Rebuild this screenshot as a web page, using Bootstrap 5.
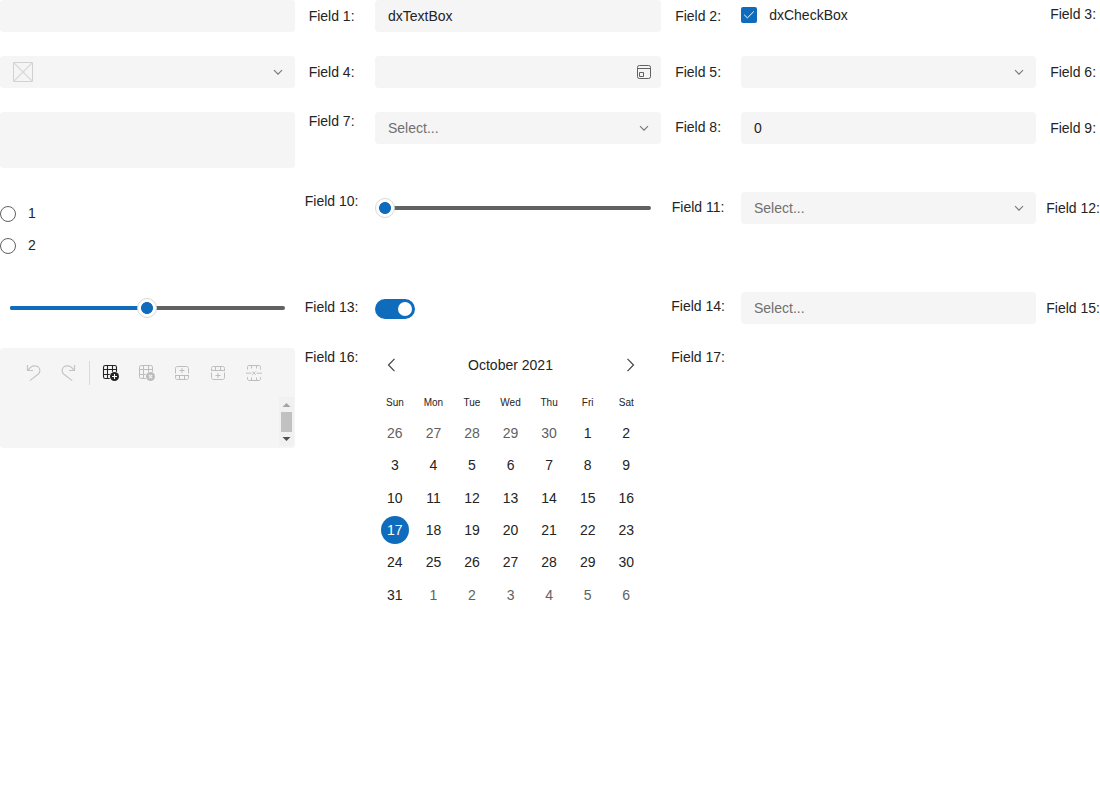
<!DOCTYPE html>
<html lang="en">
<head>
<meta charset="utf-8">
<title>Form</title>
<link href="https://cdn.jsdelivr.net/npm/bootstrap@5.3.0/dist/css/bootstrap.min.css" rel="stylesheet">
<style>
body{font-family:"Liberation Sans",Arial,sans-serif;font-size:14px;line-height:18px;color:#242424;background:#fff;overflow:hidden}
.form-grid{display:grid;grid-template-columns:295px 80px 286px 80px 295px 64px;grid-template-rows:56px 56px 80px 100px 56px auto}
.field-label{width:54px;margin-left:9.6px;text-align:center;white-space:nowrap;justify-self:start;align-self:start}
.col-shift{margin-left:10.1px}
.drop-4{margin-top:5px}.drop-5{margin-top:6px}.drop-6{margin-top:7px}
.editor{height:32px;background:#f5f5f5;border-radius:4px;padding:0 12px 0 13px}
.editor svg,.tools svg{display:block;flex:none}
.hint{color:#707070}
.check-box{width:16px;height:16px;border-radius:2px;background:#0f6cbd}
.radio-dot{width:16px;height:16px;border:1px solid #616161;border-radius:50%}
.range{height:20px;margin-top:6px}
.range-bar{height:4px;border-radius:2px;background:#616161;overflow:hidden;margin:0 10px;width:100%}
.range-fill{height:4px;background:#0f6cbd}
.handle{width:20px;height:20px;border-radius:50%;border:1px solid #d8d8d8;background:radial-gradient(circle,#0f6cbd 5.6px,#fff 6.3px)}
.toggle{width:40px;height:20px;border-radius:10px;background:#0f6cbd;padding-right:3px}
.toggle span{width:14px;height:14px;border-radius:50%;background:#fff}
.text-area{height:56px}
.rich{height:100px;background:#f5f5f5;border-radius:4px;overflow:hidden}
.tools{height:49px;padding-left:25px}
.tools .sep{width:1px;height:24px;background:#d9d9d9}
.scroller{width:15px;height:49px;background:#f1f1f1;margin-right:1px}
.scroller .thumb{width:11px;height:20px;background:#c1c1c1}
.cal{width:270px}
.cal-head{height:34px;padding:0 6px 0 7px}
.cal-grid{display:grid;grid-template-columns:repeat(7,38.57px);width:270px;margin-left:.6px}
.week-names{height:34.7px;padding-top:8px;font-size:10px;line-height:12px;align-items:center}
.days{grid-auto-rows:32.36px}
.days span{width:28px;height:28px;line-height:28px;border-radius:50%;text-align:center;place-self:center}
.days .out{color:#616161}
.days .sel{background:#0f6cbd;color:#fff}
</style>
</head>
<body>
<svg class="d-none">
<symbol id="chev" viewBox="0 0 10 6"><path d="M1 1.200 5 5.200 9 1.200" fill="none" stroke="#7a7a7a" stroke-width="1.200"/></symbol>
</svg>
<main class="form-grid">
<div class="editor"></div>
<div class="field-label drop-6">Field 1:</div>
<div class="editor d-flex align-items-center">dxTextBox</div>
<div class="field-label col-shift drop-6">Field 2:</div>
<div class="d-flex align-items-start"><div class="check-box" style="margin-top:7px"><svg class="d-block" width="16" height="16" fill="none" stroke="#fff" stroke-width="1"><path d="m3.2 7.8 3.2 3.1 6.4-6.4"/></svg></div><span style="margin:6px 0 0 12.2px">dxCheckBox</span></div>
<div class="field-label col-shift drop-4">Field 3:</div>

<div class="editor d-flex align-items-center justify-content-between"><svg width="20" height="20" fill="none" stroke="#d1d1d1"><path d="M.5.5h19v19H.5z"/><path d="m1 1 18 18M19 1 1 19" stroke-width="1.2" stroke="#d9d9d9"/></svg><svg width="10" height="6"><use href="#chev"/></svg></div>
<div class="field-label drop-6">Field 4:</div>
<div class="editor d-flex align-items-center justify-content-end" style="padding-right:10px"><svg width="14" height="14" fill="none" stroke="#616161"><rect x=".5" y=".5" width="13" height="13" rx="1.8"/><path d="M.5 3.5h13M2.5 7.5h4v4h-4z"/></svg></div>
<div class="field-label col-shift drop-6">Field 5:</div>
<div class="editor d-flex align-items-center justify-content-end"><svg width="10" height="6"><use href="#chev"/></svg></div>
<div class="field-label col-shift drop-6">Field 6:</div>

<div class="editor text-area"></div>
<div class="field-label">Field 7:</div>
<div class="editor d-flex align-items-center justify-content-between"><span class="hint">Select...</span><svg width="10" height="6"><use href="#chev"/></svg></div>
<div class="field-label col-shift drop-5">Field 8:</div>
<div class="editor d-flex align-items-center">0</div>
<div class="field-label col-shift drop-6">Field 9:</div>

<div class="d-flex flex-column" style="padding-top:12px;gap:14px">
<div class="d-flex"><div class="radio-dot mt-auto"></div><span style="margin-left:12px">1</span></div>
<div class="d-flex"><div class="radio-dot mt-auto"></div><span style="margin-left:12px">2</span></div></div>
<div class="field-label">Field 10:</div>
<div class="range position-relative d-flex align-items-center"><div class="range-bar"></div><div class="handle position-absolute" style="left:0"></div></div>
<div class="field-label col-shift drop-5">Field 11:</div>
<div class="editor d-flex align-items-center justify-content-between"><span class="hint">Select...</span><svg width="10" height="6"><use href="#chev"/></svg></div>
<div class="field-label col-shift drop-6">Field 12:</div>

<div class="range position-relative d-flex align-items-center"><div class="range-bar"><div class="range-fill" style="width:50%"></div></div><div class="handle position-absolute" style="left:137px"></div></div>
<div class="field-label drop-5">Field 13:</div>
<div><div class="toggle d-flex align-items-center justify-content-end" style="margin-top:7px"><span></span></div></div>
<div class="field-label col-shift drop-4">Field 14:</div>
<div class="editor d-flex align-items-center"><span class="hint">Select...</span></div>
<div class="field-label col-shift drop-6">Field 15:</div>

<div class="rich">
<div class="tools d-flex align-items-center">
<svg width="16" height="18" fill="none" stroke="#c4c4c4" stroke-width="1.15"><path d="M2.500 1v5.500H8M2.800 6.300C4.600 3.700 6.500 1.800 9.500 1.800c3.200 0 5.400 2 5.400 4.700 0 1.500-.6 2.700-1.800 3.700L4.800 16.600"/></svg>
<svg width="16" height="18" fill="none" stroke="#c4c4c4" stroke-width="1.15" style="margin-left:20px"><path d="M13.500 1v5.500H8M13.200 6.300C11.400 3.700 9.500 1.800 6.500 1.800 3.300 1.800 1.100 3.800 1.100 6.500c0 1.500.6 2.700 1.800 3.700l8.300 6.400"/></svg>
<div class="sep" style="margin-left:12px"></div>
<svg width="18" height="18" style="margin-left:12px"><g fill="none" stroke="#242424" stroke-width="1.1" transform="translate(1 1)"><rect x=".5" y=".5" width="13" height="13" rx="1.8"/><path d="M4.500.5v13M9.500.5v13M.5 4.500h13M.5 9.500h13"/></g><circle cx="12.500" cy="12.500" r="5.200" fill="#f5f5f5"/><circle cx="12.500" cy="12.500" r="4.500" fill="#242424"/><path d="M12.500 10v5M10 12.500h5" stroke="#fff" stroke-width="1.100"/></svg>
<svg width="18" height="18" style="margin-left:18px"><g fill="none" stroke="#bdbdbd" transform="translate(1 1)"><rect x=".5" y=".5" width="13" height="13" rx="1.8"/><path d="M4.500.5v13M9.500.5v13M.5 4.500h13M.5 9.500h13"/></g><circle cx="12.500" cy="12.500" r="5.200" fill="#f5f5f5"/><circle cx="12.500" cy="12.500" r="4.500" fill="#bdbdbd"/><path d="m10.900 10.900 3.200 3.200m0-3.200-3.200 3.200" stroke="#f5f5f5" stroke-width="1.100"/></svg>
<svg width="14" height="14" fill="none" stroke="#bdbdbd" style="margin-left:19px"><path d="M.5 7.500V2.300C.5 1.200 1.200.5 2.300.5h9.400c1.100 0 1.800.7 1.800 1.800v5.200M0 9.500h14M.5 9.500v2.200c0 1.100.7 1.800 1.800 1.800h9.400c1.100 0 1.800-.7 1.800-1.800V9.500M4.500 9.500v4M9.500 9.500v4M7 2v5M4.500 4.500h5"/></svg>
<svg width="14" height="14" fill="none" stroke="#bdbdbd" style="margin-left:22px"><path d="M.5 6.500v5.200c0 1.100.7 1.800 1.800 1.800h9.400c1.100 0 1.800-.7 1.800-1.800V6.500M0 4.500h14M.5 4.500V2.300C.5 1.200 1.200.5 2.300.5h9.400c1.100 0 1.800.7 1.800 1.800v2.200M4.500.5v4M9.500.5v4M7 7v5M4.500 9.500h5"/></svg>
<svg width="16" height="16" fill="none" stroke="#bdbdbd" style="margin-left:21px"><path d="M1.500 4.500V2.300C1.500 1.200 2 .5 3 .5h10c1 0 1.500.7 1.500 1.800v2.200M5.500.5v3M10.500.5v3M1.500 12v1.700c0 1.100.5 1.800 1.500 1.800h10c1 0 1.500-.7 1.500-1.800V12M5.500 15.500v-3M10.500 15.500v-3M6.300 6.500l3.400 3.400m0-3.400-3.400 3.400"/><path d="M0 8.200h5.500M10.500 8.200H16" stroke="#d2d2d2" stroke-width="1.500"/></svg>
</div>
<div class="scroller ms-auto d-flex flex-column align-items-center justify-content-between"><svg width="15" height="15"><path d="M3.500 10h8l-4-4z" fill="#a3a3a3"/></svg><div class="thumb"></div><svg width="15" height="14"><path d="M3.500 5h8l-4 4z" fill="#505050"/></svg></div>
</div>
<div class="field-label">Field 16:</div>
<div class="cal">
<div class="cal-head d-flex align-items-center justify-content-between"><svg width="18" height="16" fill="none" stroke="#424242" stroke-width="1.200"><path d="M12.500 1.900 6.500 8l6 6.100"/></svg><span>October 2021</span><svg width="18" height="16" fill="none" stroke="#424242" stroke-width="1.200"><path d="m6.500 1.900 6 6.100-6 6.100"/></svg></div>
<div class="cal-grid week-names text-center"><span>Sun</span><span>Mon</span><span>Tue</span><span>Wed</span><span>Thu</span><span>Fri</span><span>Sat</span></div>
<div class="cal-grid days">
<span class="out">26</span><span class="out">27</span><span class="out">28</span><span class="out">29</span><span class="out">30</span><span>1</span><span>2</span>
<span>3</span><span>4</span><span>5</span><span>6</span><span>7</span><span>8</span><span>9</span>
<span>10</span><span>11</span><span>12</span><span>13</span><span>14</span><span>15</span><span>16</span>
<span class="sel">17</span><span>18</span><span>19</span><span>20</span><span>21</span><span>22</span><span>23</span>
<span>24</span><span>25</span><span>26</span><span>27</span><span>28</span><span>29</span><span>30</span>
<span>31</span><span class="out">1</span><span class="out">2</span><span class="out">3</span><span class="out">4</span><span class="out">5</span><span class="out">6</span>
</div>
</div>
<div class="field-label col-shift">Field 17:</div>
</main>
<script src="https://cdn.jsdelivr.net/npm/bootstrap@5.3.0/dist/js/bootstrap.bundle.min.js"></script>
</body>
</html>
